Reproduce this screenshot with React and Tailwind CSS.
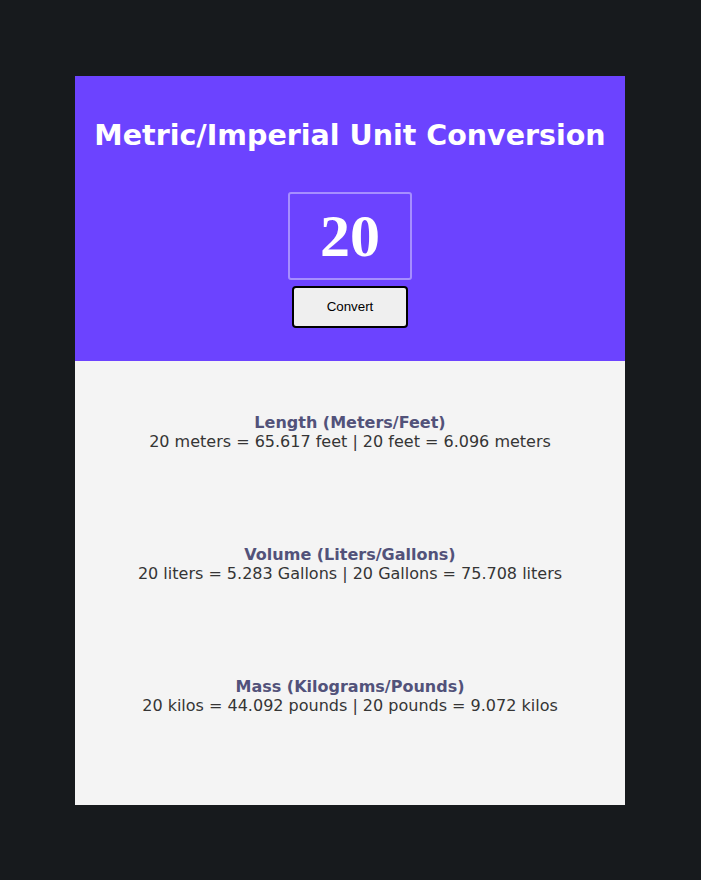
import React from "react";

const units = [
  {
    title: "Length (Meters/Feet)",
    text: (n) =>
      `${n} meters = ${(n * 3.28084).toFixed(3)} feet | ${n} feet = ${(n * 0.3048).toFixed(3)} meters`,
  },
  {
    title: "Volume (Liters/Gallons)",
    text: (n) =>
      `${n} liters = ${(n * 0.264172).toFixed(3)} Gallons | ${n} Gallons = ${(n * 3.78541).toFixed(3)} liters`,
  },
  {
    title: "Mass (Kilograms/Pounds)",
    text: (n) =>
      `${n} kilos = ${(n * 2.20462).toFixed(3)} pounds | ${n} pounds = ${(n * 0.453592).toFixed(3)} kilos`,
  },
];

export default function App() {
  const [value, setValue] = React.useState("20");
  const [num, setNum] = React.useState(20);

  return (
    <div className="min-h-[880px] bg-[#171a1d] pt-[76px] font-['DejaVu_Sans',sans-serif]">
      <div className="ml-[75px] w-[550px]">
        <div className="flex h-[285px] flex-col items-center bg-[#6c43ff] pt-[43px]">
          <h1 className="text-[28.5px] font-bold leading-[33px] text-white">
            Metric/Imperial Unit Conversion
          </h1>
          <input
            type="text"
            value={value}
            onChange={(e) => setValue(e.target.value)}
            className="mt-[40px] h-[88px] w-[124px] rounded-[3px] border-2 border-white/40 bg-transparent text-center font-['Liberation_Serif',serif] text-[60px] font-bold text-white outline-none"
          />
          <button
            type="button"
            onClick={() => setNum(Number(value) || 0)}
            className="mt-[6px] h-[42px] w-[116px] rounded-[4px] border-2 border-black bg-[#efefef] font-['Liberation_Sans',sans-serif] text-[13.33px] text-black"
          >
            Convert
          </button>
        </div>

        <div className="flex flex-col gap-[94px] bg-[#f4f4f4] pb-[90px] pt-[52px] text-center text-[16px] leading-[19px]">
          {units.map((u) => (
            <div key={u.title}>
              <h2 className="font-bold text-[#52527a]">{u.title}</h2>
              <p className="text-[#353535]">{u.text(num)}</p>
            </div>
          ))}
        </div>
      </div>
    </div>
  );
}
